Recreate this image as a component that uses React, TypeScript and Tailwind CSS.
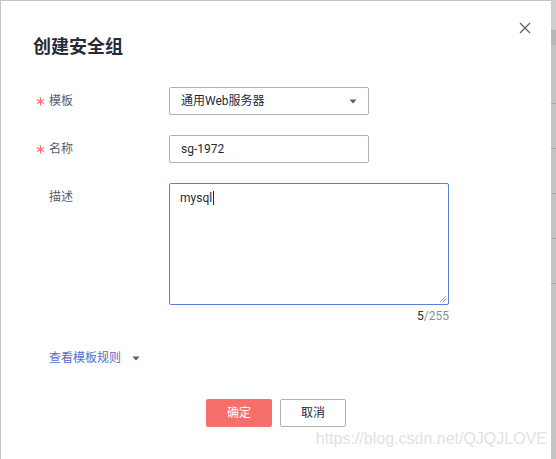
import React from "react";

function Caret() {
  return (
    <svg width="8" height="5" viewBox="0 0 8 5" className="block">
      <path d="M0.5 0.5 L7.5 0.5 L4 4.5 Z" fill="#575d6c" />
    </svg>
  );
}

function Star() {
  return (
    <svg width="9" height="9" viewBox="0 0 10 10" className="mr-[4px]">
      <path d="M5 0.5 V9.5 M1.1 2.75 L8.9 7.25 M8.9 2.75 L1.1 7.25" stroke="#f66f6a" strokeWidth="1.3" fill="none" />
    </svg>
  );
}

export default function App() {
  return (
    <div className="w-[556px] h-[459px] bg-[#c4c4c4] flex pt-[1px] pl-[1px] overflow-hidden font-['Roboto','Noto_Sans_CJK_SC',sans-serif]">
      <div className="relative w-[550px] h-[458px] bg-white shrink-0">
        <button className="absolute left-[518px] top-[21px] w-[12px] h-[12px] flex items-center justify-center">
          <svg width="12" height="12" viewBox="0 0 12 12">
            <path d="M1 1 L11 11 M11 1 L1 11" stroke="#5a6170" strokeWidth="1.3" fill="none" />
          </svg>
        </button>

        <div className="pt-[34px] px-[32px]">
          <h1 className="text-[18px] leading-[24px] font-bold text-[#252b3a]">创建安全组</h1>
        </div>

        <div className="mt-[28px] text-[12px]">
          <div className="flex items-center h-[28px]">
            <div className="w-[168px] pl-[35px] flex items-center text-[#575d6c]">
              <Star />
              <span>模板</span>
            </div>
            <div className="w-[200px] h-[28px] border border-[#adb0b8] rounded-[2px] flex items-center justify-between pl-[11px] pr-[11px] text-[#252b3a]">
              <span>通用Web服务器</span>
              <Caret />
            </div>
          </div>

          <div className="flex items-center h-[28px] mt-[20px]">
            <div className="w-[168px] pl-[35px] flex items-center text-[#575d6c]">
              <Star />
              <span>名称</span>
            </div>
            <div className="w-[200px] h-[28px] border border-[#adb0b8] rounded-[2px] flex items-center pl-[11px] text-[#252b3a]">
              sg-1972
            </div>
          </div>

          <div className="flex mt-[20px]">
            <div className="w-[168px] pl-[48px] leading-[28px] text-[#575d6c]">描述</div>
            <div className="w-[280px]">
              <div className="relative h-[122px] border border-[#5e7ce0] rounded-[2px] pl-[10px] pt-[4px] text-[#252b3a] leading-[20px]">
                <span>mysql</span>
                <span className="inline-block w-[1px] h-[14px] bg-[#252b3a] align-middle ml-[1px] -mt-[2px]"></span>
                <svg width="8" height="8" viewBox="0 0 8 8" className="absolute right-[1px] bottom-[1px]">
                  <path d="M7 1 L1 7 M7 4 L4 7" stroke="#8a9ad0" strokeWidth="0.9" />
                </svg>
              </div>
              <div className="mt-[1px] leading-[20px] text-right">
                <span className="text-[#252b3a]">5</span>
                <span className="text-[#8a8e99]">/255</span>
              </div>
            </div>
          </div>

          <div className="mt-[22px] pl-[48px] flex items-center leading-[20px]">
            <span className="text-[#526ecc]">查看模板规则</span>
            <span className="ml-[11px]"><Caret /></span>
          </div>

          <div className="mt-[31px] flex justify-center gap-[8px]">
            <button className="w-[66px] h-[28px] rounded-[2px] bg-[#f66f6a] text-white text-[12px]">确定</button>
            <button className="w-[66px] h-[28px] rounded-[2px] border border-[#adb0b8] bg-white text-[#252b3a] text-[12px]">取消</button>
          </div>
        </div>

        <div className="absolute right-[4px] bottom-[11px] text-[16px] leading-[18px] text-[#e2e2e2] font-['Liberation_Sans',Arial,sans-serif]">
          https://blog.csdn.net/QJQJLOVE
        </div>
      </div>

      <div className="flex-1 flex flex-col -mt-[1px]">
        <div className="h-[30px] bg-[#cfcfcf]"></div>
        <div className="h-[15px] bg-[#b6b6bd]"></div>
        <div className="h-[59px] border-b border-[#a9a9a9]"></div>
        <div className="h-[45px] border-b border-[#a9a9a9]"></div>
        <div className="h-[45px] border-b border-[#a9a9a9]"></div>
        <div className="h-[45px] border-b border-[#a9a9a9]"></div>
        <div className="h-[45px] border-b border-[#a9a9a9]"></div>
      </div>
    </div>
  );
}
